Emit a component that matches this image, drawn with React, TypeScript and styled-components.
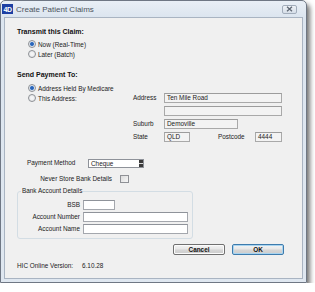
import React from "react";
import styled, { createGlobalStyle, css } from "styled-components";

const GlobalStyle = createGlobalStyle`
  html, body { margin: 0; padding: 0; background: #ffffff; }
  body { font-family: "Liberation Sans", Arial, sans-serif; color: #1b1b1b; }
  * { box-sizing: border-box; }
`;

const Window = styled.div`
  width: 307px;
  height: 283px;
  border: 1px solid #6f7784;
  border-radius: 5px 5px 0 0;
  background: linear-gradient(#e9eff6, #dce5ef 16px, #dfe7f0);
  box-shadow: 3px 4px 5px rgba(0, 0, 0, 0.55);
  display: flex;
  flex-direction: column;
  padding: 0 3px 3px 3px;
`;

const TitleBar = styled.div`
  height: 16px;
  display: flex;
  align-items: center;
  margin-left: -3px;
  padding-left: 1px;
  padding-right: 3px;
`;

const AppIcon = styled.span`
  width: 11px;
  height: 10px;
  background: #1d3fa3;
  color: #ffffff;
  font-family: "Liberation Sans", Arial, sans-serif;
  font-weight: bold;
  font-size: 7px;
  letter-spacing: -0.5px;
  display: flex;
  align-items: center;
  justify-content: center;
  flex: none;
`;

const TitleText = styled.span`
  margin-left: 3px;
  font-family: "Liberation Sans", Arial, sans-serif;
  font-size: 8px;
  color: #4d5560;
`;

const CloseButton = styled.span`
  margin-left: auto;
  margin-right: 3px;
  width: 15px;
  height: 9px;
  border: 1px solid #a2adbb;
  border-radius: 2px;
  background: linear-gradient(#eef2f7, #d6dee8);
  display: flex;
  align-items: center;
  justify-content: center;
`;

const Client = styled.div`
  flex: 1;
  background: #f0f0f0;
  border: 1px solid #a9b4c2;
  padding: 9px 18px 0 12px;
  display: flex;
  flex-direction: column;
  font-size: 6.4px;
`;

const SectionTitle = styled.div<{ $top?: number }>`
  font-weight: bold;
  font-size: 7px;
  height: 10px;
  line-height: 10px;
  margin-top: ${(p) => p.$top ?? 0}px;
  color: #111;
`;

const RadioList = styled.div<{ $top?: number }>`
  display: flex;
  flex-direction: column;
  margin-left: 11px;
  margin-top: ${(p) => p.$top ?? 0}px;
`;

const RadioRow = styled.div`
  display: flex;
  align-items: center;
  gap: 2px;
  height: 10px;
  white-space: nowrap;
`;

const Radio = styled.span<{ $checked?: boolean }>`
  width: 8px;
  height: 8px;
  border-radius: 50%;
  border: 1px solid #8d9095;
  flex: none;
  background: radial-gradient(circle at 50% 50%, #f9f9f9 0, #e1e3e6 100%);
  ${(p) =>
    p.$checked &&
    css`
      background: radial-gradient(circle at 50% 50%, #1f58ad 0, #3a74c4 1.6px, #dfe6ee 2.4px, #f4f5f7 100%);
    `}
`;

const AddressGrid = styled.div`
  display: grid;
  grid-template-columns: 105px 31px 118px;
  grid-auto-rows: 10px;
  row-gap: 3px;
  margin-left: 11px;
  align-items: center;
`;

const Label = styled.span<{ $align?: string }>`
  white-space: nowrap;
  text-align: ${(p) => p.$align ?? "left"};
  line-height: 10px;
`;

const Field = styled.div<{ $width: number; $disabled?: boolean }>`
  width: ${(p) => p.$width}px;
  height: 10px;
  border: 1px solid ${(p) => (p.$disabled ? "#a9a9a9" : "#a4a7ad")};
  border-top-color: ${(p) => (p.$disabled ? "#9c9c9c" : "#8f939a")};
  background: ${(p) => (p.$disabled ? "#f3f3f3" : "#ffffff")};
  padding-left: 2px;
  line-height: 8px;
  font-size: 6.4px;
  white-space: nowrap;
  overflow: hidden;
  color: #222;
`;

const InlineCell = styled.div`
  display: flex;
  align-items: center;
`;

const PostcodeLabel = styled(Label)`
  margin-left: 28px;
`;

const PushRight = styled.div`
  margin-left: auto;
`;

const PayRow = styled.div`
  display: flex;
  align-items: center;
  height: 10px;
  margin-top: 16px;
  padding-left: 10px;
`;

const PayLabel = styled(Label)`
  width: 61px;
`;

const Select = styled.div`
  width: 56px;
  height: 9px;
  border: 1px solid #8e9299;
  background: #ffffff;
  display: flex;
  align-items: stretch;
`;

const SelectText = styled.span`
  flex: 1;
  padding-left: 2px;
  line-height: 7px;
  font-size: 6.4px;
`;

const SelectArrow = styled.span`
  width: 4px;
  background: linear-gradient(#3a3a3a, #3a3a3a 45%, #d8d8d8 45%, #d8d8d8 60%, #3a3a3a 60%);
  flex: none;
`;

const NeverRow = styled.div`
  display: flex;
  align-items: center;
  height: 10px;
  margin-top: 6px;
`;

const NeverLabel = styled(Label)`
  width: 95px;
`;

const Checkbox = styled.span`
  margin-left: 8px;
  width: 9px;
  height: 8px;
  border: 1px solid #8f9196;
  background: linear-gradient(135deg, #dcdcdc, #f7f7f7);
`;

const Group = styled.fieldset`
  margin: 3px 0 0 0;
  padding: 5px 0 4px 0;
  width: 176px;
  border: 1px solid #d3dde4;
  border-radius: 3px;
  min-inline-size: 0;
`;

const Legend = styled.legend`
  margin-left: 3px;
  padding: 0 1px;
  font-size: 6.4px;
  line-height: 8px;
`;

const BankGrid = styled.div`
  display: grid;
  grid-template-columns: 62px auto;
  column-gap: 3px;
  grid-auto-rows: 10px;
  row-gap: 2px;
  align-items: center;
`;

const ButtonRow = styled.div`
  display: flex;
  justify-content: flex-end;
  gap: 7px;
  margin-top: 5px;
`;

const Button = styled.div<{ $default?: boolean }>`
  width: 52px;
  height: 11px;
  border: 1px solid ${(p) => (p.$default ? "#3d7bad" : "#707070")};
  border-radius: 2px;
  background: linear-gradient(#f5f5f5, #e6e6e6 48%, #d6d6d6 52%, #cdcdcd);
  box-shadow: inset 0 0 0 1px ${(p) => (p.$default ? "#a8d4f0" : "#fbfbfb")};
  display: flex;
  align-items: center;
  justify-content: center;
  font-weight: bold;
  font-size: 6.4px;
  color: #111;
`;

const VersionRow = styled.div`
  display: flex;
  align-items: center;
  height: 10px;
  margin-top: 6px;
`;

const VersionLabel = styled(Label)`
  width: 65px;
`;

export default function App() {
  return (
    <>
      <GlobalStyle />
      <Window>
        <TitleBar>
          <AppIcon>4D</AppIcon>
          <TitleText>Create Patient Claims</TitleText>
          <CloseButton>
            <svg width="7" height="6" viewBox="0 0 7 6">
              <path d="M1 0.8 L6 5.2 M6 0.8 L1 5.2" stroke="#5e6773" strokeWidth="1.3" />
            </svg>
          </CloseButton>
        </TitleBar>
        <Client>
          <SectionTitle>Transmit this Claim:</SectionTitle>
          <RadioList $top={2}>
            <RadioRow>
              <Radio $checked />
              <span>Now (Real-Time)</span>
            </RadioRow>
            <RadioRow>
              <Radio />
              <span>Later (Batch)</span>
            </RadioRow>
          </RadioList>

          <SectionTitle $top={11}>Send Payment To:</SectionTitle>
          <RadioList $top={3}>
            <RadioRow>
              <Radio $checked />
              <span>Address Held By Medicare</span>
            </RadioRow>
          </RadioList>
          <AddressGrid>
            <RadioRow>
              <Radio />
              <span>This Address:</span>
            </RadioRow>
            <Label>Address</Label>
            <Field $width={118} $disabled>Ten Mile Road</Field>

            <span />
            <span />
            <Field $width={118} $disabled />

            <span />
            <Label>Suburb</Label>
            <Field $width={74} $disabled>Demoville</Field>

            <span />
            <Label>State</Label>
            <InlineCell>
              <Field $width={26} $disabled>QLD</Field>
              <PostcodeLabel>Postcode</PostcodeLabel>
              <PushRight>
                <Field $width={27} $disabled>4444</Field>
              </PushRight>
            </InlineCell>
          </AddressGrid>

          <PayRow>
            <PayLabel>Payment Method</PayLabel>
            <Select>
              <SelectText>Cheque</SelectText>
              <SelectArrow />
            </Select>
          </PayRow>

          <NeverRow>
            <NeverLabel $align="right">Never Store Bank Details</NeverLabel>
            <Checkbox />
          </NeverRow>

          <Group>
            <Legend>Bank Account Details</Legend>
            <BankGrid>
              <Label $align="right">BSB</Label>
              <Field $width={32} />
              <Label $align="right">Account Number</Label>
              <Field $width={105} />
              <Label $align="right">Account Name</Label>
              <Field $width={105} />
            </BankGrid>
          </Group>

          <ButtonRow>
            <Button>Cancel</Button>
            <Button $default>OK</Button>
          </ButtonRow>

          <VersionRow>
            <VersionLabel>HIC Online Version:</VersionLabel>
            <Label>6.10.28</Label>
          </VersionRow>
        </Client>
      </Window>
    </>
  );
}
